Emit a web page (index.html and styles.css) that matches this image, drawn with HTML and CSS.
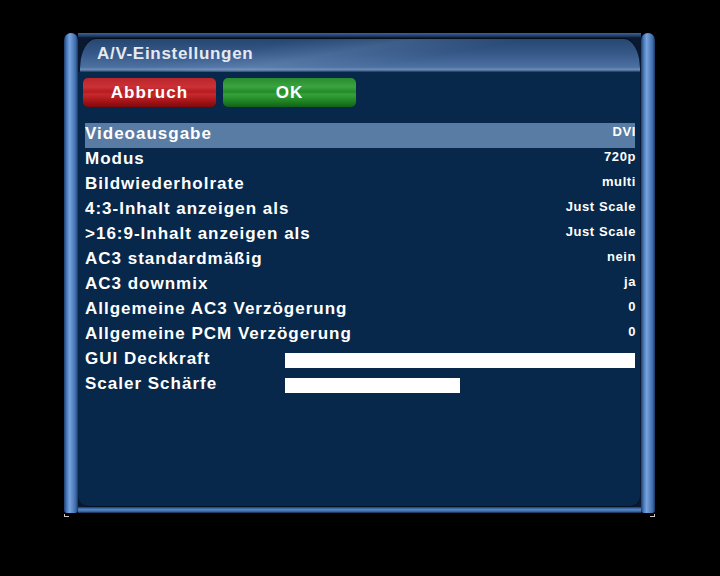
FILE: index.html
```html
<!DOCTYPE html>
<html lang="de">
<head>
<meta charset="utf-8">
<title>A/V-Einstellungen</title>
<link rel="stylesheet" href="styles.css">
</head>
<body>
<div class="screen">
  <div class="frame">
    <div class="pillar pillar-left"></div>
    <div class="middle">
      <div class="topstrip"></div>
      <div class="titlebar"><span class="title">A/V-Einstellungen</span></div>
      <div class="content">
        <div class="buttons">
          <div class="btn btn-red">Abbruch</div>
          <div class="btn btn-green">OK</div>
        </div>
        <div class="list">
          <div class="row row-selected"><span class="label">Videoausgabe</span><span class="value">DVI</span></div>
          <div class="row"><span class="label">Modus</span><span class="value">720p</span></div>
          <div class="row"><span class="label">Bildwiederholrate</span><span class="value">multi</span></div>
          <div class="row"><span class="label">4:3-Inhalt anzeigen als</span><span class="value">Just Scale</span></div>
          <div class="row"><span class="label">&gt;16:9-Inhalt anzeigen als</span><span class="value">Just Scale</span></div>
          <div class="row"><span class="label">AC3 standardmäßig</span><span class="value">nein</span></div>
          <div class="row"><span class="label">AC3 downmix</span><span class="value">ja</span></div>
          <div class="row"><span class="label">Allgemeine AC3 Verzögerung</span><span class="value">0</span></div>
          <div class="row"><span class="label">Allgemeine PCM Verzögerung</span><span class="value">0</span></div>
          <div class="row"><span class="label">GUI Deckkraft</span><span class="bar" style="width: 100%"></span></div>
          <div class="row"><span class="label">Scaler Schärfe</span><span class="bar" style="width: 50%"></span></div>
        </div>
      </div>
      <div class="bottombar"></div>
    </div>
    <div class="pillar pillar-right"></div>
  </div>
  <div class="marks"><span class="mark mark-l"></span><span class="mark mark-r"></span></div>
</div>
</body>
</html>
```
FILE: styles.css
```css
html, body {
  margin: 0;
  padding: 0;
  background: #000;
}
body {
  font-family: "Liberation Sans", Arial, sans-serif;
  font-weight: bold;
  color: #fff;
}
.screen {
  width: 720px;
  height: 576px;
  box-sizing: border-box;
  padding: 33px 0 0 64px;
  background: #000;
}
.frame {
  display: flex;
  width: 591px;
  height: 480px;
}
.pillar {
  width: 14px;
  flex: none;
  border-radius: 7px 7px 3px 3px;
  background: linear-gradient(90deg, #1e3d6c 0%, #4a7bbd 20%, #77a3dc 40%, #5d8bc9 60%, #3b68a5 85%, #1a3560 100%);
}
.middle {
  flex: 1;
  display: flex;
  flex-direction: column;
  background: #0a1930;
}
.topstrip {
  height: 5px;
  background: linear-gradient(180deg, #3a62a0 0%, #22416c 55%, #0a1628 100%);
}
.titlebar {
  height: 34px;
  box-sizing: border-box;
  margin: 0 1px 0 2px;
  padding: 0 0 5px 17px;
  line-height: 29px;
  border-radius: 16px 16px 0 0 / 30px 30px 0 0;
  border-top: 1px solid #050d1a;
  background:
    linear-gradient(170deg, rgba(255,255,255,0) 30%, rgba(150,180,220,0.18) 45%, rgba(255,255,255,0) 60%),
    linear-gradient(180deg, #27476f 0%, #36598a 45%, #4c70a0 85%, #6b8db8 93%, #1d3558 100%);
}
.title {
  font-size: 17px;
  letter-spacing: 0.7px;
  color: #e6eaf0;
}
.content {
  flex: 1;
  margin-right: 1px;
  background: #07284a;
  padding: 6px 5px 0 5px;
  border-radius: 0 0 10px 10px;
  border-bottom: 1px solid #03101f;
}
.buttons {
  display: flex;
  gap: 7px;
}
.btn {
  width: 133px;
  height: 29px;
  line-height: 29px;
  text-align: center;
  font-size: 17px;
  letter-spacing: 1.1px;
  color: #fff;
  border-radius: 5px;
}
.btn-red {
  background: linear-gradient(180deg, #b8262b 0%, #cc3136 30%, #b41c21 48%, #c8292d 56%, #a51418 80%, #7c0a0d 100%);
}
.btn-green {
  background: linear-gradient(180deg, #2a8a30 0%, #3aa53f 30%, #238a29 48%, #35a23a 56%, #1f8324 80%, #11601a 100%);
}
.list {
  margin-top: 16px;
  padding-left: 2px;
}
.row {
  display: grid;
  grid-template-columns: 200px 1fr;
  align-items: start;
  height: 25px;
}
.row-selected {
  background: #587ca3;
}
.label {
  font-size: 17px;
  letter-spacing: 1px;
  line-height: 21px;
  white-space: nowrap;
  color: #fff;
}
.value {
  justify-self: end;
  font-size: 13px;
  letter-spacing: 0.6px;
  line-height: 17px;
  color: #fff;
  margin-right: -1px;
}
.bar {
  display: block;
  height: 15px;
  margin-top: 5px;
  background: #fff;
  justify-self: start;
}
.bottombar {
  height: 6px;
  background: linear-gradient(180deg, #1c3a66 0%, #5585c6 40%, #4270ae 70%, #10284a 100%);
}
.marks {
  display: flex;
  justify-content: space-between;
  width: 591px;
  height: 4px;
  margin-top: 1px;
}
.mark {
  width: 4px;
  height: 2px;
  border-bottom: 1px solid #c8c8c8;
}
.mark-l {
  border-left: 1px solid #c8c8c8;
}
.mark-r {
  border-right: 1px solid #c8c8c8;
}
```
